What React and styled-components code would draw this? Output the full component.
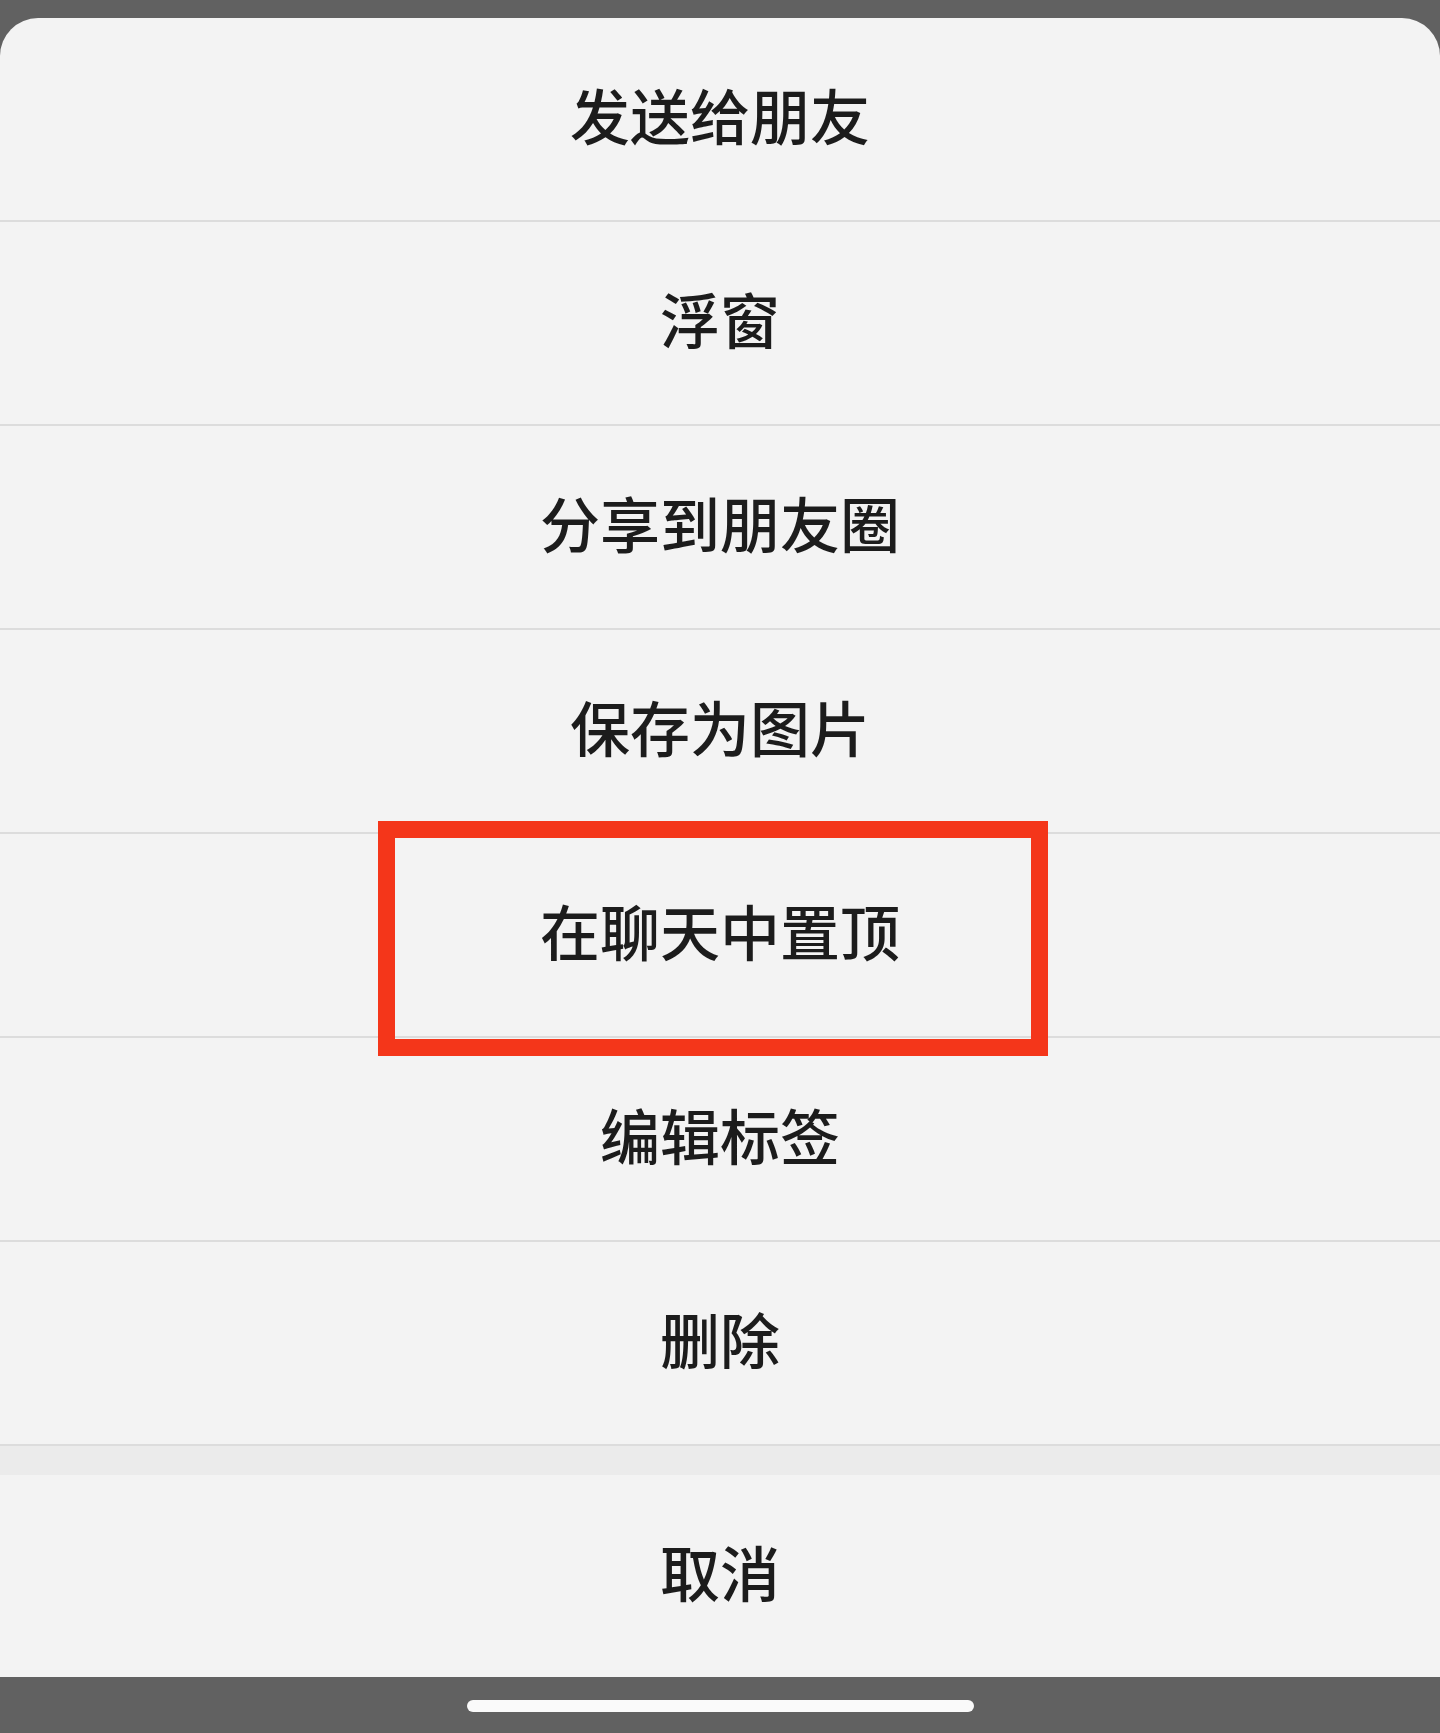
import styled, { createGlobalStyle } from "styled-components";

const GlobalStyle = createGlobalStyle`
  html, body {
    margin: 0;
    padding: 0;
    background: #616161;
  }
  body {
    font-family: "Noto Sans CJK SC", "Noto Sans", sans-serif;
  }
`;

const actions = [
  { label: "发送给朋友" },
  { label: "浮窗" },
  { label: "分享到朋友圈" },
  { label: "保存为图片" },
  { label: "在聊天中置顶", marked: true },
  { label: "编辑标签" },
  { label: "删除" },
];

export default function App() {
  return (
    <>
      <GlobalStyle />
      <Screen>
        <Sheet>
          <ActionList>
            {actions.map((action) => (
              <ActionRow key={action.label}>
                <ActionLabel>{action.label}</ActionLabel>
                {action.marked && <Highlight />}
              </ActionRow>
            ))}
          </ActionList>
          <GroupGap />
          <CancelRow>
            <ActionLabel>取消</ActionLabel>
          </CancelRow>
        </Sheet>
        <HomeBar>
          <HomeIndicator />
        </HomeBar>
      </Screen>
    </>
  );
}

const Screen = styled.div`
  width: 1440px;
  height: 1733px;
  display: flex;
  flex-direction: column;
  background: #616161;
  overflow: hidden;
`;

const Sheet = styled.section`
  margin-top: 18px;
  background: #f3f3f3;
  border-radius: 38px 38px 0 0;
  display: flex;
  flex-direction: column;
`;

const ActionList = styled.ul`
  list-style: none;
  margin: 0;
  padding: 0;
`;

const ActionRow = styled.li`
  position: relative;
  height: 202px;
  border-bottom: 2px solid #dcdcdc;
  display: flex;
  align-items: center;
  justify-content: center;
`;

const ActionLabel = styled.span`
  font-size: 60px;
  font-weight: 500;
  color: #1c1c1c;
  line-height: 1;
  margin-bottom: 10px;
`;

const Highlight = styled.div`
  position: absolute;
  left: 378px;
  top: -13px;
  width: 670px;
  height: 235px;
  box-sizing: border-box;
  border: 17px solid #f4361a;
  pointer-events: none;
`;

const GroupGap = styled.div`
  height: 29px;
  background: #ebebeb;
`;

const CancelRow = styled.div`
  height: 202px;
  display: flex;
  align-items: center;
  justify-content: center;
`;

const HomeBar = styled.div`
  height: 56px;
  display: flex;
  justify-content: center;
  padding-top: 23px;
  box-sizing: border-box;
  background: #616161;
`;

const HomeIndicator = styled.div`
  width: 507px;
  height: 12px;
  border-radius: 6px;
  background: #fafafa;
`;
